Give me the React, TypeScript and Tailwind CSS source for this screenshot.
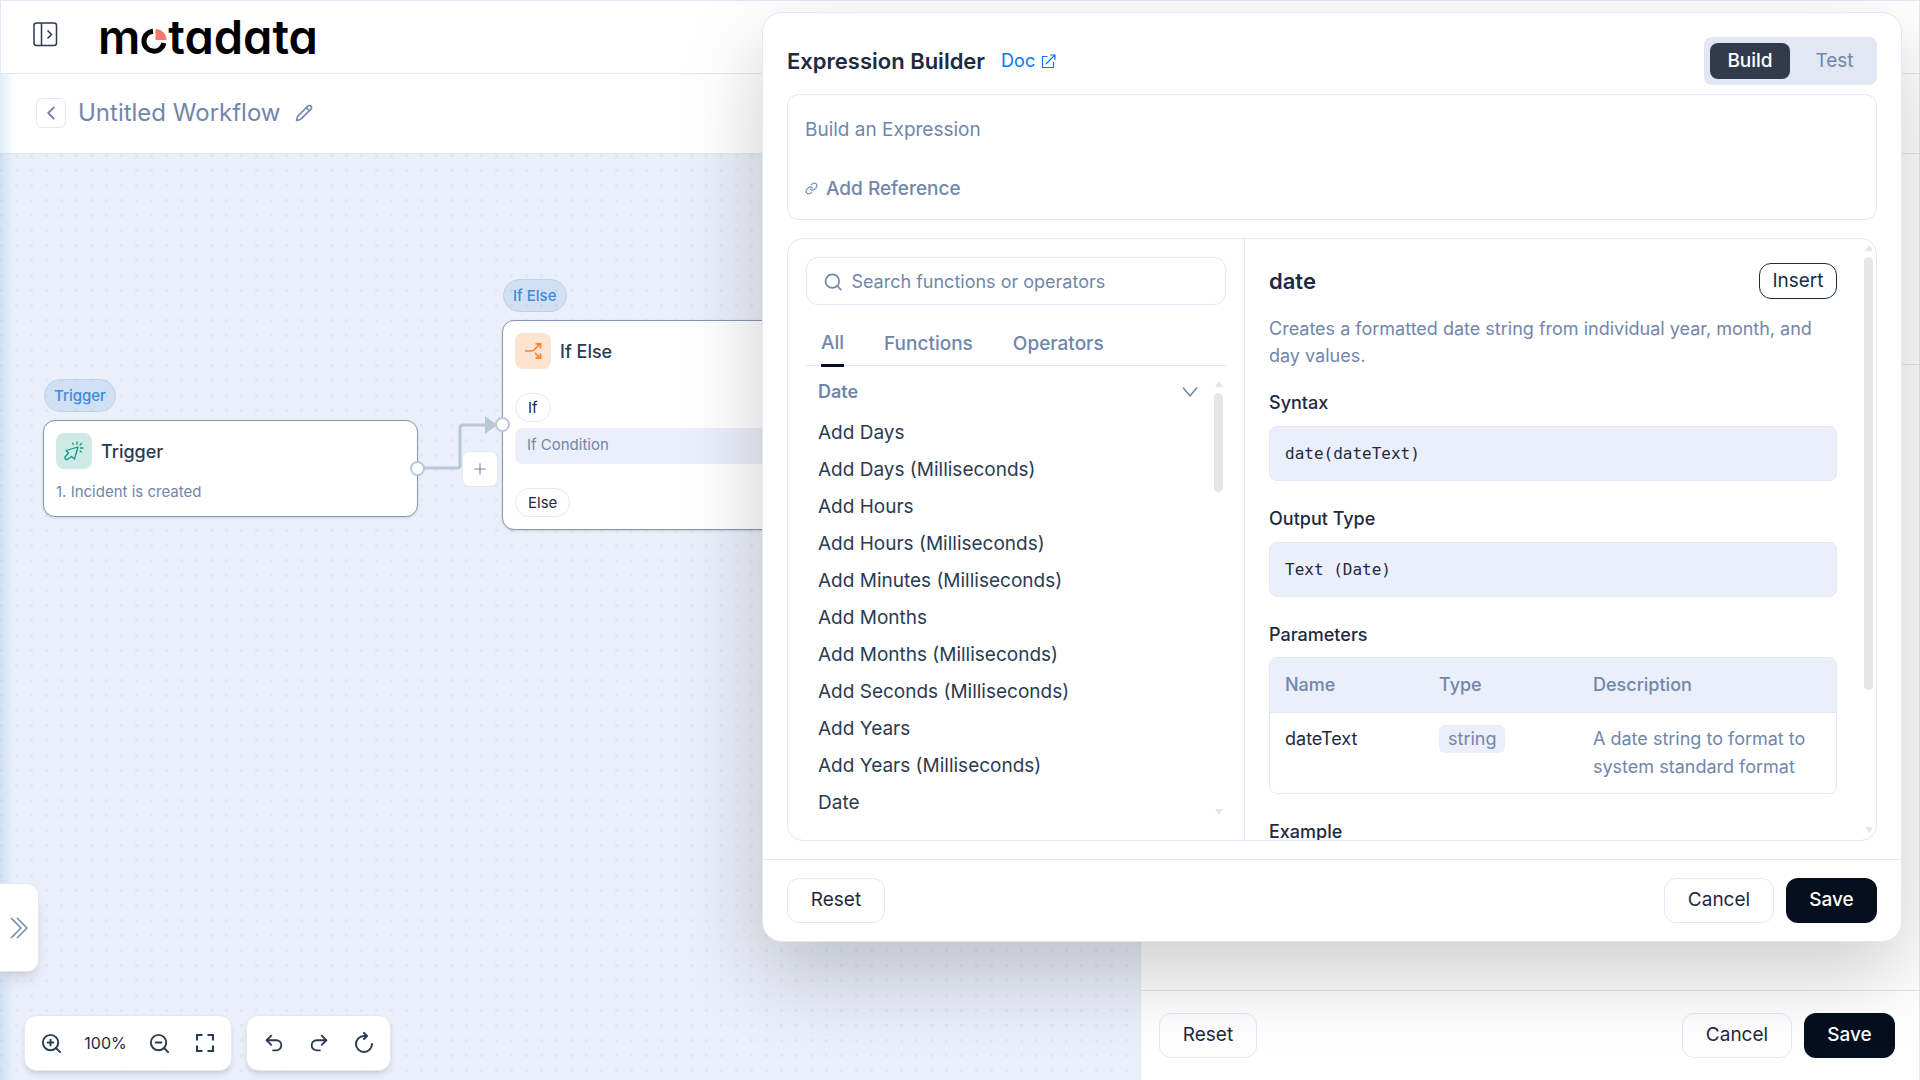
import type { ReactNode } from 'react'
import {
  ChevronLeft,
  Link,
  Pencil,
  Plus,
  Redo2,
  Search,
  Undo2,
  ZoomIn,
  ZoomOut,
} from 'lucide-react'

const dateFunctions = [
  'Add Days',
  'Add Days (Milliseconds)',
  'Add Hours',
  'Add Hours (Milliseconds)',
  'Add Minutes (Milliseconds)',
  'Add Months',
  'Add Months (Milliseconds)',
  'Add Seconds (Milliseconds)',
  'Add Years',
  'Add Years (Milliseconds)',
  'Date',
]

const tabs = ['All', 'Functions', 'Operators']

function Logo() {
  return (
    <a
      href="#"
      aria-label="motadata"
      className="flex items-baseline text-[47px] leading-[56px] font-semibold text-black [font-feature-settings:'cv11']"
    >
      <span>m</span>
      <svg width="26" height="26" viewBox="0 0 26 26" fill="none" className="mx-px" aria-hidden="true">
        <path d="M12 3.200A10 10 0 1 0 22.800 15" stroke="#000" strokeWidth="5" />
        <path d="M14.500 1a11 11 0 0 1 11 11H14.500z" fill="#f4796b" />
      </svg>
      <span>tadata</span>
    </a>
  )
}

function FooterActions() {
  return (
    <>
      <button className="h-[45px] w-[98px] rounded-xl border border-[#e2e7f3] text-[19px] text-[#1e2a3f]">Reset</button>
      <div className="flex gap-3">
        <button className="h-[45px] w-[110px] rounded-xl border border-[#e2e7f3] text-[19px] text-[#1e2a3f]">Cancel</button>
        <button className="h-[45px] w-[91px] rounded-xl bg-[#050f1e] text-[19px] font-medium text-white">Save</button>
      </div>
    </>
  )
}

function ScrollTrack({ thumb }: { thumb: string }) {
  return (
    <div className="flex w-[9px] shrink-0 flex-col items-center" aria-hidden="true">
      <svg width="8" height="6" viewBox="0 0 8 6" fill="#e6e6e6">
        <path d="M4 0l4 6H0z" />
      </svg>
      <div className={`mt-1.5 w-full rounded-full bg-[#e6e6e6] ${thumb}`} />
      <svg width="8" height="6" viewBox="0 0 8 6" fill="#e6e6e6" className="mt-auto">
        <path d="M0 0h8L4 6z" />
      </svg>
    </div>
  )
}

function NodeTag({ children }: { children: ReactNode }) {
  return (
    <span className="ml-px flex h-[33px] w-fit items-center rounded-full border border-[#b9d3ec] bg-[#3d8ad6]/15 px-[9px] pt-0.5 text-[15px] font-medium text-[#3d8ad6]">
      {children}
    </span>
  )
}

function Toolbar({ children }: { children: ReactNode }) {
  return (
    <div className="flex h-[56px] items-center rounded-xl border border-[#e2e7f3] bg-white px-1 text-[#2b3b52] shadow-md">
      {children}
    </div>
  )
}

function ToolButton({ label, children }: { label: string; children: ReactNode }) {
  return (
    <button aria-label={label} className="flex h-11 w-[45px] items-center justify-center">
      {children}
    </button>
  )
}

function Canvas() {
  return (
    <main className="relative flex-1 overflow-hidden bg-[#ebeff9] bg-[conic-gradient(from_270deg_at_3px_3px,#e1e6f3_90deg,transparent_0)] bg-[length:15px_15px]">
      {/* Edge between the two nodes */}
      <svg width="520" height="400" className="absolute top-0 left-0" fill="none" aria-hidden="true">
        <path d="M417 314H457Q460 314 460 311V274Q460 271 463 271H488" stroke="#b9c8d6" strokeWidth="3" />
        <path d="M485 262l12 9-12 9z" fill="#b9c8d6" />
      </svg>

      <section className="absolute top-[225px] left-[43px] w-[375px]">
        <NodeTag>Trigger</NodeTag>
        <div className="mt-2 h-[97px] rounded-xl border border-[#8496b8] bg-white px-3 pt-3 shadow-sm">
          <div className="flex items-center gap-[9px]">
            <span className="flex size-9 items-center justify-center rounded-lg bg-[#cfeae5]">
              <svg width="20" height="20" viewBox="0 0 20 20" fill="none" stroke="#109888" strokeWidth="1.3" strokeLinejoin="round" strokeLinecap="round">
                <path d="M14 6L2 9.500l2.500 2.500L1.500 15.500a1.500 1.500 0 0 0 2.500 2.500l3.500-2.500L10.500 18z" />
                <path d="M13 3V1M9.500 3.500L8.500 2M16 4l1.500-1.500M16.500 7H19M16 10l1.500 1" />
              </svg>
            </span>
            <h2 className="pt-0.5 text-lg font-medium text-[#2b3b52]">Trigger</h2>
          </div>
          <p className="mt-3 text-[15px] leading-[22px] text-[#7186ab]">1. Incident is created</p>
        </div>
      </section>
      <span className="absolute top-[307px] left-[410px] size-[15px] rounded-full border-2 border-[#b9c8d6] bg-white" />

      <section className="absolute top-[125px] left-[502px] w-[375px]">
        <NodeTag>If Else</NodeTag>
        <div className="mt-2 h-[210px] rounded-xl border border-[#8496b8] bg-white px-3 pt-3 shadow-sm">
          <div className="flex items-center gap-[9px]">
            <span className="flex size-9 items-center justify-center rounded-lg bg-[#fde4d0]">
              <svg width="18" height="18" viewBox="0 0 18 18" fill="none" stroke="#f9822b" strokeWidth="1.700">
                <path d="M1 9h6q2 0 3.500-1.500L16 2M11.500 1.800H16.500V6.500M11 11l5 5M16.500 11.500v4.700H11.500" />
              </svg>
            </span>
            <h2 className="pt-0.5 text-lg font-medium text-[#2b3b52]">If Else</h2>
          </div>
          <span className="mt-6 flex h-[29px] w-fit items-center rounded-full border border-[#e2e7f3] px-3 pt-px text-[15px] text-[#1e2a3f]">If</span>
          <div className="mt-1.5 h-9 rounded-lg bg-[#ebeff9] px-3 text-[15px] leading-[34px] text-[#7186ab]">If Condition</div>
          <span className="mt-6 flex h-[29px] w-fit items-center rounded-full border border-[#e2e7f3] px-3 pt-px text-[15px] text-[#1e2a3f]">Else</span>
        </div>
      </section>
      <span className="absolute top-[263px] left-[495px] size-[15px] rounded-full border-2 border-[#b9c8d6] bg-white" />

      <button
        aria-label="Add step"
        className="absolute top-[297px] left-[462px] flex size-9 items-center justify-center rounded-lg border border-[#e2e7f3] bg-white text-[#7186ab]"
      >
        <Plus size={18} strokeWidth={1.5} />
      </button>

      <div className="absolute bottom-[9px] left-6 flex gap-3.5">
        <Toolbar>
          <ToolButton label="Zoom in">
            <ZoomIn size={23} strokeWidth={2} />
          </ToolButton>
          <span className="w-[63px] text-center text-base text-[#1e2a3f]">100%</span>
          <ToolButton label="Zoom out">
            <ZoomOut size={23} strokeWidth={2} />
          </ToolButton>
          <ToolButton label="Fit view">
            <svg width="18" height="18" viewBox="0 0 18 18" fill="none" stroke="currentColor" strokeWidth="2.200">
              <path d="M1 6.500V1H6.500M11.500 1H17V6.500M17 11.500V17H11.500M6.500 17H1V11.500" />
            </svg>
          </ToolButton>
        </Toolbar>
        <Toolbar>
          <ToolButton label="Undo">
            <Undo2 size={22} strokeWidth={2} />
          </ToolButton>
          <ToolButton label="Redo">
            <Redo2 size={22} strokeWidth={2} />
          </ToolButton>
          <ToolButton label="Reload">
            <svg width="20" height="22" viewBox="0 0 20 22" fill="none" stroke="currentColor" strokeWidth="2" strokeLinecap="round" strokeLinejoin="round">
              <path d="M18 12a8 8 0 1 1-8-8h2.500M10 1l3 3-3 3" />
            </svg>
          </ToolButton>
        </Toolbar>
      </div>
    </main>
  )
}

function FunctionList() {
  return (
    <div className="flex w-[457px] shrink-0 flex-col border-r border-[#e2e7f3] px-[18px] pt-[18px]">
      <label className="flex h-12 shrink-0 items-center gap-2 rounded-xl border border-[#e2e7f3] px-4 pt-px text-[#7186ab]">
        <Search size={22} strokeWidth={2} />
        <input
          type="text"
          aria-label="Search functions or operators"
          placeholder="Search functions or operators"
          className="w-full text-lg outline-none placeholder:text-[#7186ab]"
        />
      </label>
      <div role="tablist" className="mt-4 flex h-[45px] shrink-0 gap-10 border-b border-[#e2e7f3] px-[15px]">
        {tabs.map((tab, i) => (
          <button
            key={tab}
            role="tab"
            aria-selected={i === 0}
            className={
              i === 0
                ? '-mb-0.5 border-b-3 border-[#050f1e] pt-0.5 text-[19px] font-medium text-[#7186ab]'
                : 'pt-0.5 text-[19px] font-medium text-[#7186ab]'
            }
          >
            {tab}
          </button>
        ))}
      </div>
      <div className="flex h-[461px] pt-2 pr-[3px] pb-1">
        <div className="min-w-0 flex-1 overflow-hidden pl-3">
          <button className="flex h-9 w-full items-center justify-between pr-4 text-lg font-semibold text-[#7186ab]">
            Date
            <svg width="16" height="10" viewBox="0 0 16 10" fill="none" stroke="#7186ab" strokeWidth="1.500">
              <path d="M1 0.500l7 8.500 7-8.500" />
            </svg>
          </button>
          <ul className="mt-1">
            {dateFunctions.map((name) => (
              <li key={name} className="h-[37px] text-[19px] leading-[37px] text-[#2b3b52]">
                {name}
              </li>
            ))}
          </ul>
        </div>
        <div className="flex pt-[7px] pb-2">
          <ScrollTrack thumb="h-[99px]" />
        </div>
      </div>
    </div>
  )
}

function FunctionDetails() {
  return (
    <div className="flex min-w-0 flex-1 pr-[3px]">
      <div className="min-w-0 flex-1 overflow-hidden pt-6 pr-[27px] pl-6 text-[#1e2a3f]">
        <div className="flex items-center justify-between">
          <h2 className="text-[22px] font-semibold">date</h2>
          <button className="h-9 w-[78px] rounded-xl border border-[#1e2a3f] text-[19px]">Insert</button>
        </div>
        <p className="mt-4 text-lg leading-[27px] text-[#7186ab]">
          Creates a formatted date string from individual year, month, and day values.
        </p>
        <h3 className="mt-5 text-lg leading-7 font-medium">Syntax</h3>
        <code className="mt-[9px] block h-[55px] rounded-lg border border-[#e2e7f3] bg-[#ebeff9] px-[15px] font-['DejaVu_Sans_Mono',monospace] text-base leading-[53px]">
          date(dateText)
        </code>
        <h3 className="mt-6 text-lg leading-7 font-medium">Output Type</h3>
        <code className="mt-[9px] block h-[55px] rounded-lg border border-[#e2e7f3] bg-[#ebeff9] px-[15px] font-['DejaVu_Sans_Mono',monospace] text-base leading-[53px]">
          Text (Date)
        </code>
        <h3 className="mt-6 text-lg leading-7 font-medium">Parameters</h3>
        <div className="mt-2 overflow-hidden rounded-lg border border-[#e2e7f3]">
          <table className="w-full table-fixed text-left text-lg leading-7">
            <thead className="bg-[#ebeff9] text-[#7186ab]">
              <tr className="h-[54px] border-b border-[#e2e7f3]">
                <th className="w-[154px] px-[15px] font-medium">Name</th>
                <th className="w-[154px] px-[15px] font-medium">Type</th>
                <th className="px-[15px] font-medium">Description</th>
              </tr>
            </thead>
            <tbody>
              <tr className="align-top">
                <td className="px-[15px] pt-3 pb-3">dateText</td>
                <td className="px-[15px] pt-3 pb-3">
                  <span className="inline-block rounded-md bg-[#ebeff9] px-[9px] text-[#7186ab]">string</span>
                </td>
                <td className="px-[15px] pt-3 pb-3 text-[#7186ab]">A date string to format to system standard format</td>
              </tr>
            </tbody>
          </table>
        </div>
        <h3 className="mt-6 text-lg leading-7 font-medium">Example</h3>
      </div>
      <div className="flex pt-1.5 pb-[7px]">
        <ScrollTrack thumb="h-[433px]" />
      </div>
    </div>
  )
}

function ExpressionBuilder() {
  return (
    <div
      role="dialog"
      aria-label="Expression Builder"
      className="absolute top-3 right-[18px] z-20 w-[1140px] rounded-[20px] border border-[#e2e7f3] bg-white shadow-[0_32px_84px_rgba(0,0,0,0.2)]"
    >
      <div className="px-6 pt-6">
        <div className="flex items-center justify-between">
          <div className="flex items-center gap-4">
            <h1 className="text-[22px] font-semibold text-[#1e2a3f]">Expression Builder</h1>
            <a href="#" className="flex items-center gap-1.5 text-lg text-[#0a77f5]">
              Doc
              <svg width="15" height="15" viewBox="0 0 15 15" fill="none" stroke="currentColor" strokeWidth="1.200">
                <path d="M6.500 2.500H1.500v11H12.500V8M9 1H14V6M14 1L5 10" />
              </svg>
            </a>
          </div>
          <div className="flex h-12 rounded-lg bg-[#e2e7f3] p-1.5 text-[19px]">
            <button className="w-20 rounded-lg bg-[#323b4b] font-medium text-white">Build</button>
            <button className="w-[81px] pl-2 text-[#7186ab]">Test</button>
          </div>
        </div>
        <div className="mt-[9px] flex h-[126px] flex-col justify-between rounded-xl border border-[#e2e7f3] px-[17px] py-4 text-[#7186ab]">
          <input
            type="text"
            aria-label="Expression"
            placeholder="Build an Expression"
            className="h-9 w-full text-[19px] outline-none placeholder:text-[#7186ab]"
          />
          <button className="flex items-center gap-2 text-[19px] font-medium">
            <Link size={13} strokeWidth={2} />
            Add Reference
          </button>
        </div>
        <div className="mt-[18px] flex h-[603px] overflow-hidden rounded-2xl border border-[#e2e7f3]">
          <FunctionList />
          <FunctionDetails />
        </div>
      </div>
      <div className="mt-[18px] flex justify-between border-t border-[#e2e7f3] px-6 py-[18px]">
        <FooterActions />
      </div>
    </div>
  )
}

export default function App() {
  return (
    <div className="relative flex min-h-screen flex-col overflow-hidden bg-white font-['Inter',sans-serif]">
      <header className="flex h-[74px] items-center gap-10 border border-[#e2e7f3] px-8">
        <button aria-label="Toggle sidebar" className="pb-1.5">
          <svg width="25" height="25" viewBox="0 0 25 25" fill="none" stroke="#2b3b52" strokeWidth="1.500">
            <rect x="1" y="1" width="22.500" height="22.500" rx="2.500" />
            <path d="M8.500 1v22.500M14.500 8.500l4 4-4 4" />
          </svg>
        </button>
        <Logo />
      </header>

      <div className="relative flex flex-1 flex-col border-r border-[#e2e7f3]">
        <div className="flex h-20 items-center border-b border-[#e2e7f3] px-9 pb-0.5 text-[#7186ab]">
          <button aria-label="Back" className="flex size-[30px] items-center justify-center rounded-md border border-[#e2e7f3]">
            <ChevronLeft size={22} strokeWidth={2} />
          </button>
          <span className="ml-3 text-2xl">Untitled Workflow</span>
          <button aria-label="Rename workflow" className="ml-3.5">
            <Pencil size={18} strokeWidth={2} />
          </button>
        </div>
        <div className="flex flex-1">
          <Canvas />
          <aside className="flex w-[779px] shrink-0 flex-col border-l border-[#e2e7f3] bg-white">
            <div className="h-[211px] border-b border-[#e2e7f3]" />
            <div className="mt-auto flex h-[90px] items-start justify-between border-t border-[#e2e7f3] pt-[22px] pr-6 pl-[18px]">
              <FooterActions />
            </div>
          </aside>
        </div>
        {/* Glow along the collapsed panel edge */}
        <div className="pointer-events-none absolute inset-y-0 left-0 w-3.5 bg-linear-to-r from-[#5ba4dc]/20 to-transparent" />
        <button
          aria-label="Expand panel"
          className="absolute bottom-[108px] left-0 flex h-[89px] w-[39px] items-center justify-center rounded-r-xl border border-l-0 border-[#e2e7f3] bg-white shadow-lg"
        >
          <svg width="18" height="22" viewBox="0 0 18 22" fill="none" stroke="#7186ab" strokeWidth="1.500">
            <path d="M1 1l10 10L1 21M7 1l10 10L7 21" />
          </svg>
        </button>
      </div>

      <ExpressionBuilder />
    </div>
  )
}
